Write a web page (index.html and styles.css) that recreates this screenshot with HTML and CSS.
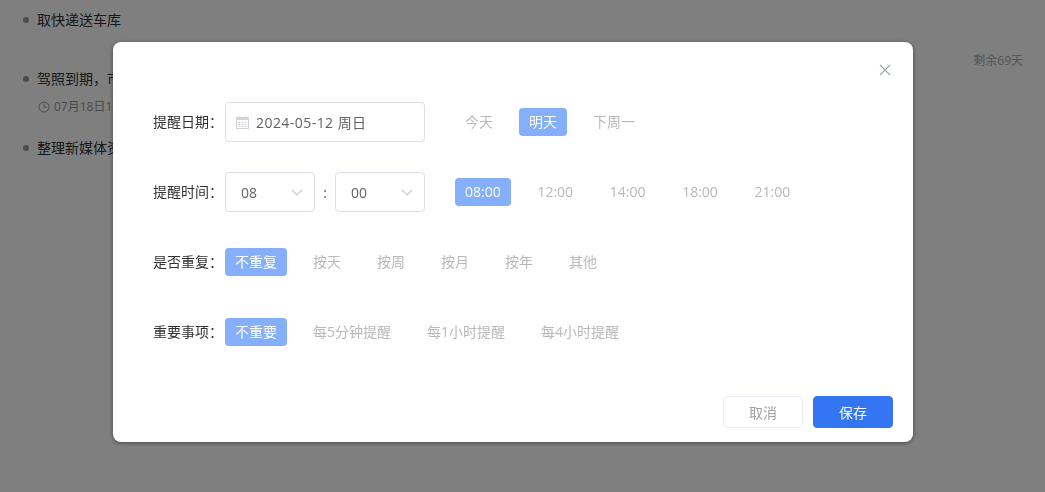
FILE: index.html
```html
<!DOCTYPE html>
<html lang="zh-CN">
<head>
<meta charset="utf-8">
<title>提醒设置</title>
<link rel="stylesheet" href="styles.css">
</head>
<body>
<ul class="tasks">
  <li class="task task-first"><span class="dot"></span><span class="task-title">取快递送车库</span></li>
  <li class="task task-second">
    <div class="task-line"><span class="dot"></span><span class="task-title">驾照到期，市</span><span class="remain">剩余69天</span></div>
    <div class="task-meta">
      <svg class="clock" viewBox="0 0 12 12" width="12" height="12"><circle cx="6" cy="6" r="5" fill="none" stroke="currentColor"/><path d="M6 3v3.2h2.6" fill="none" stroke="currentColor"/></svg>
      <span>07月18日12:00</span>
    </div>
  </li>
  <li class="task task-third"><span class="dot"></span><span class="task-title">整理新媒体资料</span></li>
</ul>

<div class="overlay"></div>

<section class="modal">
  <button class="close" aria-label="关闭">
    <svg viewBox="0 0 12 12" width="12" height="12"><path d="M1 1l10 10M11 1L1 11" fill="none" stroke="#9aa3b2" stroke-width="1.1"/></svg>
  </button>
  <div class="form">
    <div class="row">
      <label class="label">提醒日期：</label>
      <div class="field date">
        <svg class="cal" viewBox="0 0 13 13" width="13" height="13"><path d="M.5 1.5h12v11H.5z" fill="none" stroke="#d0d3db"/><path d="M0 1h13v3H0z" fill="#d0d3db"/><path d="M3 0v2M10 0v2" stroke="#d0d3db"/><path d="M2.5 6.5h8M2.5 8.5h8M2.5 10.5h8" fill="none" stroke="#d0d3db" stroke-dasharray="2 1"/></svg>
        <span class="date-text">2024-05-12 周日</span>
      </div>
      <div class="chips chips-after">
        <span class="chip">今天</span>
        <span class="chip on">明天</span>
        <span class="chip">下周一</span>
      </div>
    </div>
    <div class="row">
      <label class="label">提醒时间：</label>
      <div class="field select"><span>08</span>
        <svg class="arrow" viewBox="0 0 12 7" width="12" height="7"><path d="M1 1l5 5 5-5" fill="none" stroke="#c6cad3" stroke-width="1.1"/></svg>
      </div>
      <span class="colon">:</span>
      <div class="field select"><span>00</span>
        <svg class="arrow" viewBox="0 0 12 7" width="12" height="7"><path d="M1 1l5 5 5-5" fill="none" stroke="#c6cad3" stroke-width="1.1"/></svg>
      </div>
      <div class="chips chips-after chips-time">
        <span class="chip on">08:00</span>
        <span class="chip">12:00</span>
        <span class="chip">14:00</span>
        <span class="chip">18:00</span>
        <span class="chip">21:00</span>
      </div>
    </div>
    <div class="row">
      <label class="label">是否重复：</label>
      <div class="chips">
        <span class="chip on">不重复</span>
        <span class="chip">按天</span>
        <span class="chip">按周</span>
        <span class="chip">按月</span>
        <span class="chip">按年</span>
        <span class="chip">其他</span>
      </div>
    </div>
    <div class="row">
      <label class="label">重要事项：</label>
      <div class="chips">
        <span class="chip on">不重要</span>
        <span class="chip">每5分钟提醒</span>
        <span class="chip">每1小时提醒</span>
        <span class="chip">每4小时提醒</span>
      </div>
    </div>
  </div>
  <div class="footer">
    <button class="btn">取消</button>
    <button class="btn primary">保存</button>
  </div>
</section>
</body>
</html>
```
FILE: styles.css
```css
* { box-sizing: border-box; }
html, body { margin: 0; height: 100%; overflow: hidden; }
body {
  background: #fff;
  font-family: "Open Sans", "Noto Sans CJK SC", sans-serif;
  font-size: 14px;
  color: #303133;
}
.tasks { list-style: none; margin: 0; padding: 10px 22px 0 23px; }
.task { line-height: 20px; }
.task-first { display: flex; align-items: center; }
.task-second { margin-top: 39px; }
.task-third { display: flex; align-items: center; margin-top: 21px; }
.task-line { display: flex; align-items: center; }
.dot { width: 6px; height: 6px; border-radius: 50%; background: #999; margin-right: 8px; flex: none; }
.remain { margin-left: auto; margin-top: -37px; font-size: 12px; color: #aaa; }
.task-meta { display: flex; align-items: center; gap: 4px; margin: 8px 0 0 15px; font-size: 12px; color: #999; height: 20px; }
.overlay { position: fixed; inset: 0; background: rgba(0, 0, 0, .5); }

.modal {
  position: fixed;
  left: 113px;
  top: 42px;
  width: 800px;
  height: 400px;
  background: #fff;
  border-radius: 8px;
  box-shadow: 0 1px 4px rgba(0, 0, 0, .45);
  display: flex;
  flex-direction: column;
}
.close {
  position: absolute;
  right: 22px;
  top: 22px;
  width: 12px;
  height: 12px;
  padding: 0;
  border: 0;
  background: none;
  display: flex;
}
.form { padding: 60px 0 0 40px; display: flex; flex-direction: column; gap: 30px; }
.row { display: flex; align-items: center; height: 40px; }
.label { width: 72px; color: #303133; white-space: nowrap; line-height: 20px; }
.field {
  height: 40px;
  border: 1px solid #dcdfe6;
  border-radius: 4px;
  display: flex;
  align-items: center;
  color: #606266;
  background: #fff;
}
.date { width: 200px; padding-left: 10px; gap: 7px; }
.date-text { letter-spacing: .45px; }
.select { width: 90px; padding: 0 11px 0 15px; justify-content: space-between; }
.colon { width: 20px; text-align: center; color: #606266; }
.chips { display: flex; gap: 16px; }
.chips-time { gap: 16.7px; }
.chips-after { margin-left: 30px; }
.chip {
  height: 28px;
  line-height: 28px;
  padding: 0 10px;
  border-radius: 4px;
  color: #b9b9b9;
  white-space: nowrap;
}
.chip.on { background: #85aefb; color: #fff; }
.footer { margin-top: auto; padding: 0 20px 14px 0; display: flex; justify-content: flex-end; gap: 10px; }
.btn {
  width: 80px;
  height: 32px;
  border: 1px solid #ebeef5;
  border-radius: 4px;
  background: #fff;
  color: #a3a3a3;
  font: inherit;
  padding: 0;
}
.btn.primary { background: #3375f3; border-color: #3375f3; color: #fff; }
```
